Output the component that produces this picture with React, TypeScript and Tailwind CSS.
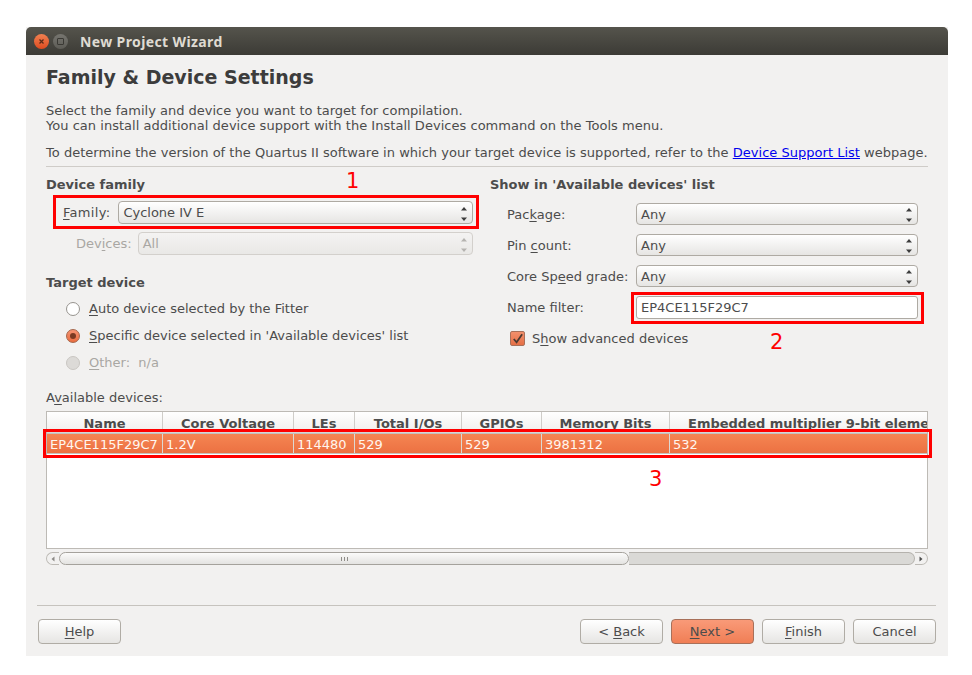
import React from "react";

const font = { fontFamily: '"DejaVu Sans", sans-serif' };

function Arrows({ disabled }: { disabled?: boolean }) {
  const c = disabled ? "#b5b3b0" : "#3c3c3c";
  return (
    <svg width="6" height="14" viewBox="0 0 6 14" className="mt-[2px] shrink-0">
      <path d="M3 0 L6 3.4 L0 3.4 Z" fill={c} />
      <path d="M3 14 L6 10.6 L0 10.6 Z" fill={c} />
    </svg>
  );
}

function Select({ value, disabled, className }: { value: string; disabled?: boolean; className: string }) {
  return (
    <div
      className={`flex items-center justify-between rounded-[4px] border pl-[4px] pr-[5px] text-[13px] leading-[15px] ${
        disabled
          ? "border-[#d3d0cc] bg-gradient-to-b from-[#f4f3f2] to-[#e9e8e6] text-[#a9a7a3]"
          : "border-[#aeaaa3] bg-gradient-to-b from-[#ffffff] to-[#e6e5e3] text-[#4c4c4c]"
      } ${className}`}
    >
      <span>{value}</span>
      <Arrows disabled={disabled} />
    </div>
  );
}

function Radio({ state }: { state: "off" | "on" | "disabled" }) {
  if (state === "on")
    return (
      <span className="flex h-[14px] w-[14px] shrink-0 items-center justify-center rounded-full border border-[#a5654a] bg-gradient-to-b from-[#f59472] to-[#ea6c3f]">
        <span className="h-[6px] w-[6px] rounded-full bg-[#7a3a22]" />
      </span>
    );
  if (state === "disabled")
    return <span className="h-[14px] w-[14px] shrink-0 rounded-full border border-[#c9c6c2] bg-[#dcdad7]" />;
  return <span className="h-[14px] w-[14px] shrink-0 rounded-full border border-[#97948f] bg-white" />;
}

function U({ children }: { children: React.ReactNode }) {
  return <span className="underline decoration-1 underline-offset-2">{children}</span>;
}

function Btn({ children, primary }: { children: React.ReactNode; primary?: boolean }) {
  return (
    <div
      className={`flex h-[25px] w-[83px] items-center justify-center rounded-[4px] border text-[13px] text-[#4c4c4c] ${
        primary
          ? "border-[#a8705a] bg-gradient-to-b from-[#f99a78] to-[#f07e55]"
          : "border-[#b0aca5] bg-gradient-to-b from-[#ffffff] to-[#e6e5e3]"
      }`}
    >
      <span>{children}</span>
    </div>
  );
}

const cols: { name: string; value: string; w: string }[] = [
  { name: "Name", value: "EP4CE115F29C7", w: "w-[116px]" },
  { name: "Core Voltage", value: "1.2V", w: "w-[131px]" },
  { name: "LEs", value: "114480", w: "w-[61px]" },
  { name: "Total I/Os", value: "529", w: "w-[107px]" },
  { name: "GPIOs", value: "529", w: "w-[80px]" },
  { name: "Memory Bits", value: "3981312", w: "w-[128px]" },
];

function Table() {
  return (
    <div className="mt-[6px] h-[138px] overflow-hidden border border-[#bdbab5] bg-white">
      <div className="flex h-[21px] overflow-hidden border-b border-[#d8d6d3] bg-gradient-to-b from-[#ffffff] to-[#f0efed] text-[13px] font-bold text-[#4c4c4c]">
        {cols.map((c) => (
          <div key={c.name} className={`${c.w} shrink-0 border-r border-[#cfcdc9] pt-[4px] text-center leading-[15px]`}>
            {c.name}
          </div>
        ))}
        <div className="w-[300px] shrink-0 whitespace-nowrap pl-[18px] pt-[4px] leading-[15px]">
          Embedded multiplier 9-bit elements
        </div>
      </div>
      <div className="flex h-[21px] overflow-hidden border-y border-[#c4c2be] bg-gradient-to-b from-[#f58552] to-[#ec7142] text-[13px] text-[#fff6ef]">
        {cols.map((c) => (
          <div key={c.name} className={`${c.w} shrink-0 border-r border-[#dcd8d3] pl-[3px] leading-[21px]`}>
            {c.value}
          </div>
        ))}
        <div className="flex-1 pl-[3px] leading-[21px]">532</div>
      </div>
    </div>
  );
}

function Scrollbar() {
  return (
    <div className="mt-[3px] flex h-[13px] items-stretch">
      <div className="flex w-[13px] items-center justify-center rounded-l-[7px] border border-r-0 border-[#bdbab5] bg-[#f2f1f0]">
        <svg width="4" height="6" viewBox="0 0 4 6"><path d="M3.5 0.5 L0.5 3 L3.5 5.5 Z" fill="#8b8985" /></svg>
      </div>
      <div className="flex w-[570px] items-center justify-center rounded-[7px] border border-[#a5a29c] bg-gradient-to-b from-[#fbfbfa] to-[#e4e3e1]">
        <svg width="7" height="4" viewBox="0 0 7 4"><path d="M0.5 0V4M3.5 0V4M6.5 0V4" stroke="#8f8d88" strokeWidth="1" /></svg>
      </div>
      <div className="flex-1 rounded-r-[7px] border-y border-r border-[#b5b2ad] bg-[#dad9d6]" />
      <div className="flex w-[13px] items-center justify-center rounded-r-[7px] border border-l-0 border-[#bdbab5] bg-[#f2f1f0]">
        <svg width="4" height="6" viewBox="0 0 4 6"><path d="M0.5 0.5 L3.5 3 L0.5 5.5 Z" fill="#4c4c4c" /></svg>
      </div>
    </div>
  );
}

function Overlay({ className }: { className: string }) {
  return <div className={`pointer-events-none absolute border-[3px] border-[#ff0000] ${className}`} />;
}

function Num({ className, children }: { className: string; children: React.ReactNode }) {
  return <div className={`absolute text-[21px] leading-[24px] text-[#ff0000] ${className}`}>{children}</div>;
}

export default function App() {
  return (
    <div style={font} className="relative h-[675px] w-[972px] overflow-hidden bg-white pl-[26px] pt-[27px]">
      <div className="flex h-[629px] w-[922px] flex-col bg-[#f2f1f0]">
        <div className="flex h-[28px] shrink-0 items-center rounded-t-[5px] bg-gradient-to-b from-[#55544c] to-[#3c3b36] pl-[8px]">
          <span className="flex h-[15px] w-[15px] items-center justify-center rounded-full bg-gradient-to-b from-[#f08050] to-[#dd4a1e]">
            <svg width="7" height="7" viewBox="0 0 7 7"><path d="M1.5 1.5L5.5 5.5M5.5 1.5L1.5 5.5" stroke="#5a2a18" strokeWidth="1.3" /></svg>
          </span>
          <span className="ml-[4px] flex h-[15px] w-[15px] items-center justify-center rounded-full bg-gradient-to-b from-[#76756f] to-[#5d5c56]">
            <span className="h-[7px] w-[7px] rounded-[1px] border border-[#3a3934]" />
          </span>
          <span style={{ fontFamily: '"Noto Sans", sans-serif' }} className="ml-[12px] text-[14px] font-bold tracking-[0.38px] text-[#dfdbd2]">
            New Project Wizard
          </span>
        </div>

        <div className="flex flex-1 flex-col">
          <div className="px-[20px] text-[13px] leading-[15px] text-[#4c4c4c]">
            <h1 className="pt-[10px] text-[19px] font-bold leading-[24px] text-[#3c3c3c]">Family &amp; Device Settings</h1>
            <p className="mt-[14px]">
              Select the family and device you want to target for compilation.
              <br />
              <span className="tracking-[0.03px]">You can install additional device support with the Install Devices command on the Tools menu.</span>
            </p>
            <p className="mt-[12px] whitespace-nowrap tracking-[0.02px]">
              To determine the version of the Quartus II software in which your target device is supported, refer to the{" "}
              <span className="text-[#0000ee] underline">Device Support List</span> webpage.
            </p>
            <div className="mt-[6px] h-px bg-[#cfccc8]" />

            <div className="mt-[10px] grid h-[213px] grid-cols-[428px_428px] gap-x-[16px]">
              <div>
                <div className="font-bold">Device family</div>
                <div className="mt-[9px] flex items-center gap-[8px] pl-[17px]">
                  <span className="tracking-[0.3px]">
                    <U>F</U>amily:
                  </span>
                  <Select value="Cyclone IV E" className="mr-[1px] h-[23px] flex-1" />
                </div>
                <div className="mt-[8px] flex items-center gap-[6px] pl-[30px] text-[#a9a7a3]">
                  <span>
                    Dev<U>i</U>ces:
                  </span>
                  <Select value="All" disabled className="mr-[1px] h-[23px] flex-1" />
                </div>
                <div className="mt-[20px] font-bold">Target device</div>
                <div className="mt-[11px] flex flex-col gap-[12px] pl-[20px]">
                  <div className="flex items-center gap-[9px]">
                    <Radio state="off" />
                    <span>
                      <U>A</U>uto device selected by the Fitter
                    </span>
                  </div>
                  <div className="flex items-center gap-[9px]">
                    <Radio state="on" />
                    <span>
                      <U>S</U>pecific device selected in 'Available devices' list
                    </span>
                  </div>
                  <div className="flex items-center gap-[9px] text-[#a9a7a3]">
                    <Radio state="disabled" />
                    <span>
                      <U>O</U>ther:&nbsp; n/a
                    </span>
                  </div>
                </div>
              </div>

              <div>
                <div className="font-bold">Show in 'Available devices' list</div>
                <div className="mt-[11px] flex flex-col gap-[9px] pl-[17px]">
                  {[
                    [<>Pac<U>k</U>age:</>, "Any"],
                    [<>Pin <U>c</U>ount:</>, "Any"],
                    [<>Core Sp<U>e</U>ed grade:</>, "Any"],
                  ].map(([l, v], i) => (
                    <div key={i} className="flex items-center">
                      <span className="w-[129px]">{l}</span>
                      <Select value={v as string} className="h-[22px] w-[282px]" />
                    </div>
                  ))}
                  <div className="flex items-center">
                    <span className="w-[129px]">Name filter:</span>
                    <div className="flex h-[23px] w-[282px] items-center rounded-[3px] border border-[#aeaaa3] bg-white pl-[4px]">EP4CE115F29C7</div>
                  </div>
                </div>
                <div className="mt-[12px] flex items-center gap-[8px] pl-[20px]">
                  <span className="flex h-[15px] w-[15px] items-center justify-center rounded-[2px] border border-[#a8705a] bg-gradient-to-b from-[#f2906c] to-[#e56f45]">
                    <svg width="14" height="14" viewBox="0 0 14 14"><path d="M3 7 L6 10.5 L12 2" fill="none" stroke="#4a3a32" strokeWidth="1.9" /></svg>
                  </span>
                  <span className="-ml-px">
                    S<U>h</U>ow advanced devices
                  </span>
                </div>
              </div>
            </div>

            <div>
              A<U>v</U>ailable devices:
            </div>
            <Table />
            <Scrollbar />
          </div>

          <div className="ml-[11px] mr-[12px] mt-auto pb-[12px]">
            <div className="h-px bg-[#c6c3be]" />
            <div className="mt-[13px] flex items-center justify-between pl-px">
              <Btn>
                <U>H</U>elp
              </Btn>
              <div className="flex gap-[8px]">
                <Btn>
                  &lt; <U>B</U>ack
                </Btn>
                <Btn primary>
                  <U>N</U>ext &gt;
                </Btn>
                <Btn>
                  <U>F</U>inish
                </Btn>
                <Btn>Cancel</Btn>
              </div>
            </div>
          </div>
        </div>
      </div>

      <Overlay className="left-[53px] top-[195px] h-[34px] w-[426px]" />
      <Overlay className="left-[631px] top-[292px] h-[32px] w-[293px]" />
      <Overlay className="left-[43px] top-[429px] h-[29px] w-[889px]" />
      <Num className="left-[346px] top-[169px]">1</Num>
      <Num className="left-[770px] top-[330px]">2</Num>
      <Num className="left-[649px] top-[467px]">3</Num>
    </div>
  );
}
